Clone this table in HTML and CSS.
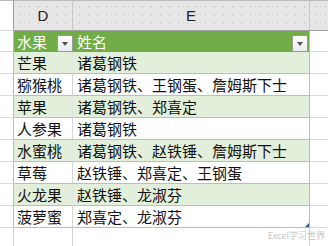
FILE: index.html
```html
<!DOCTYPE html>
<html lang="zh">
<head>
<meta charset="utf-8">
<link rel="stylesheet" href="styles.css">
</head>
<body>
<div class="sheet">
  <div class="ch rn"></div><div class="ch">D</div><div class="ch">E</div><div class="ch last"></div>

  <div class="rn t"></div>
  <div class="c h d">水果<span class="dd"></span></div>
  <div class="c h e">姓名<span class="dd"></span></div>
  <div class="c f"></div>

  <div class="rn t"></div><div class="c b d">芒果</div><div class="c b e">诸葛钢铁</div><div class="c f"></div>
  <div class="rn t"></div><div class="c w d">猕猴桃</div><div class="c w e">诸葛钢铁、王钢蛋、詹姆斯下士</div><div class="c f"></div>
  <div class="rn t"></div><div class="c b d">苹果</div><div class="c b e">诸葛钢铁、郑喜定</div><div class="c f"></div>
  <div class="rn t"></div><div class="c w d">人参果</div><div class="c w e">诸葛钢铁</div><div class="c f"></div>
  <div class="rn t"></div><div class="c b d">水蜜桃</div><div class="c b e">诸葛钢铁、赵铁锤、詹姆斯下士</div><div class="c f"></div>
  <div class="rn t"></div><div class="c w d">草莓</div><div class="c w e">赵铁锤、郑喜定、王钢蛋</div><div class="c f"></div>
  <div class="rn t"></div><div class="c b d">火龙果</div><div class="c b e">赵铁锤、龙淑芬</div><div class="c f"></div>
  <div class="rn t"></div><div class="c w d">菠萝蜜</div><div class="c w e endcell">郑喜定、龙淑芬<span class="handle"></span></div><div class="c f"></div>

  <div class="rn"></div><div class="c g"></div><div class="c g"></div><div class="c f"></div>
</div>
<div class="mark">Excel学习世界</div>
</body>
</html>
```

FILE: styles.css
```css
html, body {
  margin: 0;
  padding: 0;
  background: #ffffff;
  overflow: hidden;
}

body {
  width: 328px;
  height: 246px;
  position: relative;
  font-family: "Noto Sans CJK SC", "Noto Sans", sans-serif;
}

.sheet {
  display: grid;
  grid-template-columns: 14px 59px 237px 1fr;
  grid-template-rows: 31px 21px repeat(8, 22px) 22px;
}

.sheet > div {
  box-sizing: border-box;
}

.ch {
  background-color: #e6e6e6;
  background-image: radial-gradient(circle, #c9c9c9 0.6px, transparent 0.9px);
  background-size: 9px 8px;
  background-position: 2px 2px;
  border-top: 1px solid #bcbcbc;
  border-bottom: 1px solid #9f9f9f;
  border-right: 1px solid #c6c6c6;
  font-family: "Liberation Sans", "Noto Sans", sans-serif;
  font-size: 15px;
  color: #222222;
  text-align: center;
  line-height: 30px;
}

.ch.rn {
  border-right: 1px solid #9f9f9f;
}

.ch.last {
  border-right: none;
}

.rn {
  background: #ffffff;
  border-right: 1px solid #a9d08e;
  border-bottom: 1px solid #dadada;
}

.rn:last-child, .sheet > .rn:nth-last-child(4) {
  border-right: 1px solid #d4d4d4;
}

.c {
  position: relative;
  font-size: 15px;
  line-height: 21px;
  color: #111111;
  padding-left: 3px;
  white-space: nowrap;
  border-bottom: 1px solid #a9d08e;
}

.c.e {
  padding-left: 4px;
}

.c.d {
  border-right: 1px solid #e4e4e4;
}

.c.e {
  border-right: 1px solid #a9d08e;
}

.c.w.d {
  border-right: 1px solid #d6d6d6;
}

.c.h {
  background: #70ad47;
  color: #ffffff;
  border-bottom: none;
  border-right: none;
}

.c.h.e {
  border-right: 1px solid #a9d08e;
}

.c.b {
  background: #e2efda;
}

.c.w {
  background: #ffffff;
}

.c.f {
  border-bottom: 1px solid #dadada;
}

.c.g {
  border-right: 1px solid #d4d4d4;
  border-bottom: 1px solid #dadada;
}

.dd {
  position: absolute;
  right: 0;
  bottom: 0;
  width: 16px;
  height: 17px;
  box-sizing: border-box;
  border: 1px solid #9a9a9a;
  background: linear-gradient(#ffffff, #e8ecf0);
}

.c.h.e .dd {
  right: 1px;
}

.dd::after {
  content: "";
  position: absolute;
  left: 4px;
  top: 6px;
  border-left: 3px solid transparent;
  border-right: 3px solid transparent;
  border-top: 4px solid #505050;
}

.handle {
  position: absolute;
  right: 0;
  bottom: 0;
  width: 0;
  height: 0;
  border-left: 4px solid transparent;
  border-bottom: 4px solid #2b579a;
}

.mark {
  position: absolute;
  right: 3px;
  bottom: 5px;
  font-size: 9px;
  line-height: 10px;
  color: #c4c4c4;
  font-family: "Noto Sans CJK SC", "Liberation Sans", sans-serif;
}
```
